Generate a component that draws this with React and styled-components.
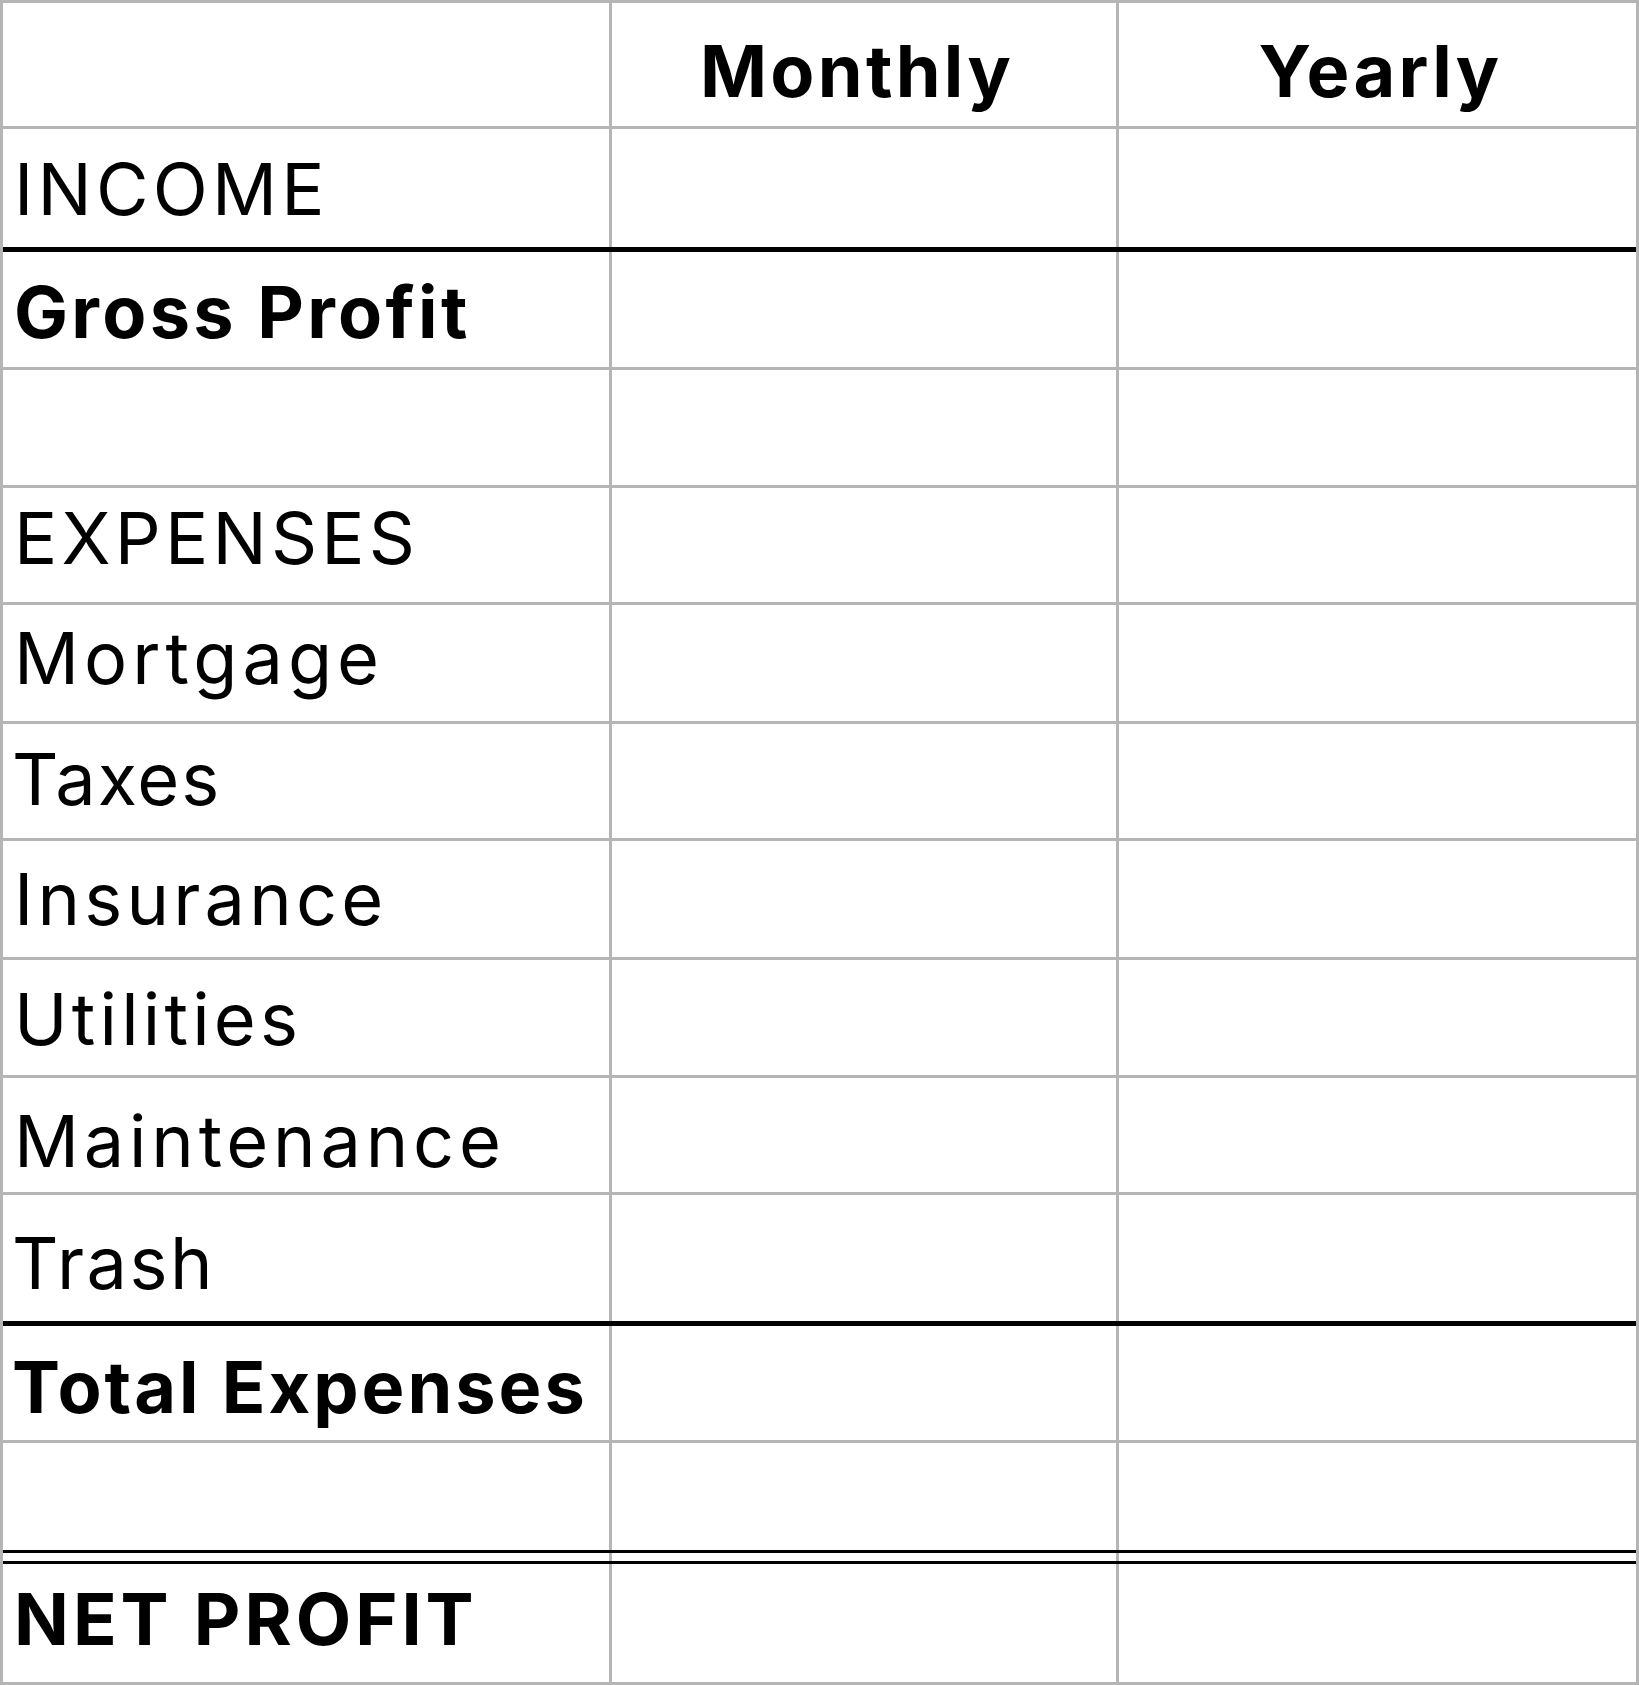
import React from 'react'
import styled, { createGlobalStyle } from 'styled-components'

const GlobalStyle = createGlobalStyle`
  html,
  body {
    margin: 0;
    padding: 0;
    background: #fff;
    overflow: hidden;
  }
  body {
    font-family: Inter, 'Noto Sans', sans-serif;
    color: #000;
  }
`

const GRID = '#b5b5b5'

const rules = {
  thin: `3px solid ${GRID}`,
  thick: '5px solid #000',
  black: '3px solid #000',
  none: 'none',
}

const Sheet = styled.section`
  width: 1639px;
  box-sizing: border-box;
  border: 3px solid ${GRID};
  background: #fff;
`

const Row = styled.div`
  display: grid;
  grid-template-columns: 609px 507px 1fr;
  height: ${(p) => p.$h}px;
  border-bottom: ${(p) => rules[p.$rule]};
`

// $shift moves the text up/down, $nudge moves it left/right (px)
const Cell = styled.div`
  box-sizing: border-box;
  display: flex;
  align-items: center;
  justify-content: ${(p) => (p.$center ? 'center' : 'flex-start')};
  padding-top: ${(p) => Math.max(0, 2 * (p.$shift || 0))}px;
  padding-bottom: ${(p) => Math.max(0, -2 * (p.$shift || 0))}px;
  padding-left: ${(p) =>
    p.$center ? Math.max(0, 2 * (p.$nudge || 0)) : p.$indent ?? 11}px;
  padding-right: ${(p) =>
    p.$center ? Math.max(0, -2 * (p.$nudge || 0)) : 0}px;
  border-right: 3px solid ${GRID};
  font-size: 72px;
  font-weight: ${(p) => (p.$bold ? 700 : 400)};
  letter-spacing: ${(p) => p.$tracking ?? (p.$bold ? 3.3 : 4.2)}px;
  white-space: nowrap;

  &:last-child {
    border-right: none;
  }
`

const rows = [
  { label: 'INCOME', h: 118, rule: 'thick', shift: 0 },
  { label: 'Gross Profit', bold: true, h: 115, rule: 'thin', shift: 2 },
  { label: '', h: 115, rule: 'thin' },
  { label: 'EXPENSES', h: 114, rule: 'thin', shift: -7.5 },
  { label: 'Mortgage', h: 116, rule: 'thin', shift: -5.5, tracking: 5 },
  { label: 'Taxes', h: 114, rule: 'thin', shift: -3, tracking: 2, indent: 9 },
  { label: 'Insurance', h: 116, rule: 'thin', shift: -0.5 },
  { label: 'Utilities', h: 115, rule: 'thin', shift: 0.5 },
  { label: 'Maintenance', h: 114, rule: 'thin', shift: 5, tracking: 4.8 },
  { label: 'Trash', h: 126, rule: 'thick', shift: 4.5, tracking: 2.5, indent: 9 },
  { label: 'Total Expenses', bold: true, h: 114, rule: 'thin', shift: 3, tracking: 3, indent: 9 },
  { label: '', h: 107, rule: 'black' },
  { label: '', h: 8, rule: 'black' },
  { label: 'NET PROFIT', bold: true, h: 118, rule: 'none', shift: -4.5, tracking: 4 },
]

const App = () => {
  return (
    <>
      <GlobalStyle />
      <Sheet>
        <Row $h={123} $rule='thin'>
          <Cell />
          <Cell $center $bold $shift={5.5} $nudge={-7}>
            Monthly
          </Cell>
          <Cell $center $bold $shift={5.5} $nudge={3}>
            Yearly
          </Cell>
        </Row>
        {rows.map((row, i) => (
          <Row key={i} $h={row.h} $rule={row.rule}>
            <Cell
              $bold={row.bold}
              $shift={row.shift}
              $tracking={row.tracking}
              $indent={row.indent}
            >
              {row.label}
            </Cell>
            <Cell />
            <Cell />
          </Row>
        ))}
      </Sheet>
    </>
  )
}

export default App
